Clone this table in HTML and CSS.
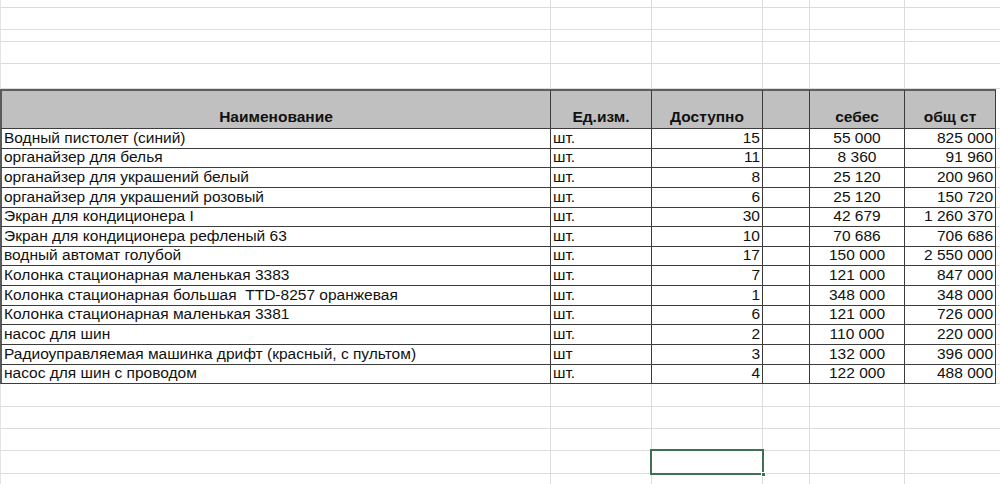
FILE: index.html
```html
<!DOCTYPE html>
<html lang="ru">
<head>
<meta charset="utf-8">
<title>Остатки</title>
<link rel="stylesheet" href="styles.css">
</head>
<body>
<div class="sheet">
  <!-- top empty rows -->
  <div class="c a"></div><div class="c"></div><div class="c"></div><div class="c"></div><div class="c"></div><div class="c f"></div><div class="c z"></div>
  <div class="c a"></div><div class="c"></div><div class="c"></div><div class="c"></div><div class="c"></div><div class="c f"></div><div class="c z"></div>
  <div class="c a"></div><div class="c"></div><div class="c"></div><div class="c"></div><div class="c"></div><div class="c f"></div><div class="c z"></div>
  <div class="c a"></div><div class="c"></div><div class="c"></div><div class="c"></div><div class="c"></div><div class="c f"></div><div class="c z"></div>
  <div class="c a"></div><div class="c"></div><div class="c"></div><div class="c"></div><div class="c"></div><div class="c f"></div><div class="c z"></div>

  <!-- header -->
  <div class="h first">Наименование</div><div class="h">Ед.изм.</div><div class="h">Доступно</div><div class="h"></div><div class="h">себес</div><div class="h">общ ст</div><div class="c z"></div>

  <!-- data -->
  <div class="d first l">Водный пистолет (синий)</div><div class="d u">шт.</div><div class="d r">15</div><div class="d"></div><div class="d m">55 000</div><div class="d r">825 000</div><div class="c z"></div>
  <div class="d first l">органайзер для белья</div><div class="d u">шт.</div><div class="d r">11</div><div class="d"></div><div class="d m">8 360</div><div class="d r">91 960</div><div class="c z"></div>
  <div class="d first l">органайзер для украшений белый</div><div class="d u">шт.</div><div class="d r">8</div><div class="d"></div><div class="d m">25 120</div><div class="d r">200 960</div><div class="c z"></div>
  <div class="d first l">органайзер для украшений розовый</div><div class="d u">шт.</div><div class="d r">6</div><div class="d"></div><div class="d m">25 120</div><div class="d r">150 720</div><div class="c z"></div>
  <div class="d first l">Экран для кондиционера I</div><div class="d u">шт.</div><div class="d r">30</div><div class="d"></div><div class="d m">42 679</div><div class="d r">1 260 370</div><div class="c z"></div>
  <div class="d first l">Экран для кондиционера рефленый 63</div><div class="d u">шт.</div><div class="d r">10</div><div class="d"></div><div class="d m">70 686</div><div class="d r">706 686</div><div class="c z"></div>
  <div class="d first l">водный автомат голубой</div><div class="d u">шт.</div><div class="d r">17</div><div class="d"></div><div class="d m">150 000</div><div class="d r">2 550 000</div><div class="c z"></div>
  <div class="d first l">Колонка стационарная маленькая 3383</div><div class="d u">шт.</div><div class="d r">7</div><div class="d"></div><div class="d m">121 000</div><div class="d r">847 000</div><div class="c z"></div>
  <div class="d first l">Колонка стационарная большая  TTD-8257 оранжевая</div><div class="d u">шт.</div><div class="d r">1</div><div class="d"></div><div class="d m">348 000</div><div class="d r">348 000</div><div class="c z"></div>
  <div class="d first l">Колонка стационарная маленькая 3381</div><div class="d u">шт.</div><div class="d r">6</div><div class="d"></div><div class="d m">121 000</div><div class="d r">726 000</div><div class="c z"></div>
  <div class="d first l">насос для шин</div><div class="d u">шт.</div><div class="d r">2</div><div class="d"></div><div class="d m">110 000</div><div class="d r">220 000</div><div class="c z"></div>
  <div class="d first l">Радиоуправляемая машинка дрифт (красный, с пультом)</div><div class="d u">шт</div><div class="d r">3</div><div class="d"></div><div class="d m">132 000</div><div class="d r">396 000</div><div class="c z"></div>
  <div class="d first l">насос для шин с проводом</div><div class="d u">шт.</div><div class="d r">4</div><div class="d"></div><div class="d m">122 000</div><div class="d r">488 000</div><div class="c z"></div>

  <!-- bottom empty rows -->
  <div class="c a"></div><div class="c"></div><div class="c"></div><div class="c"></div><div class="c"></div><div class="c f"></div><div class="c z"></div>
  <div class="c a"></div><div class="c"></div><div class="c"></div><div class="c"></div><div class="c"></div><div class="c f"></div><div class="c z"></div>
  <div class="c a"></div><div class="c"></div><div class="c"></div><div class="c"></div><div class="c"></div><div class="c f"></div><div class="c z"></div>
  <div class="c a"></div><div class="c"></div><div class="c sel"></div><div class="c"></div><div class="c"></div><div class="c f"></div><div class="c z"></div>
  <div class="c a"></div><div class="c"></div><div class="c"></div><div class="c"></div><div class="c"></div><div class="c f"></div><div class="c z"></div>
</div>
</body>
</html>
```

FILE: styles.css
```css
html, body {
  margin: 0;
  padding: 0;
  background: #ffffff;
}

body {
  width: 1000px;
  height: 484px;
  overflow: hidden;
  font-family: "Liberation Sans", Arial, sans-serif;
  font-size: 15.5px;
  color: #111111;
}

.sheet {
  display: grid;
  grid-template-columns: 551px 101px 111px 47px 95px 91px 1fr;
  grid-template-rows:
    8px 22px 12px 22px 25px
    40px
    repeat(13, 19.65px)
    22.5px 22px 22.5px 23px 30px;
  width: 1000px;
}

.sheet > div {
  box-sizing: border-box;
  min-width: 0;
  overflow: hidden;
  white-space: pre;
}

/* empty grid cells */
.c {
  border-right: 1px solid #dcdcdc;
  border-bottom: 1px solid #dcdcdc;
}
.c.a {
  border-left: 1px solid #e4e4e4;
}
.c.f,
.c.z {
  border-right: none;
}

/* header cells */
.h {
  background: #c0c0c0;
  border-top: 2px solid #5e5e5e;
  border-right: 1px solid #3c3c3c;
  border-bottom: 1px solid #3c3c3c;
  font-weight: bold;
  display: flex;
  align-items: flex-end;
  justify-content: center;
  line-height: 18px;
  padding-bottom: 2px;
}

/* data cells */
.d {
  border-right: 1px solid #3c3c3c;
  border-bottom: 1px solid #3c3c3c;
  display: flex;
  align-items: flex-end;
  line-height: 17px;
  padding-bottom: 2px;
}

.first {
  border-left: 2px solid #5a5a5a;
}

.l { justify-content: flex-start; padding-left: 2px; }
.u { justify-content: flex-start; padding-left: 2px; }
.r { justify-content: flex-end; padding-right: 2px; }
.m { justify-content: center; }

/* selected cell */
.sel {
  position: relative;
  overflow: visible !important;
}
.sel::before {
  content: "";
  position: absolute;
  left: -2px;
  top: -2px;
  right: -2px;
  bottom: -2px;
  border: 2px solid #3d7152;
}
.sel::after {
  content: "";
  position: absolute;
  right: -4px;
  bottom: -4px;
  width: 5px;
  height: 5px;
  background: #3d7152;
  border: 1px solid #ffffff;
  box-sizing: border-box;
}
```
